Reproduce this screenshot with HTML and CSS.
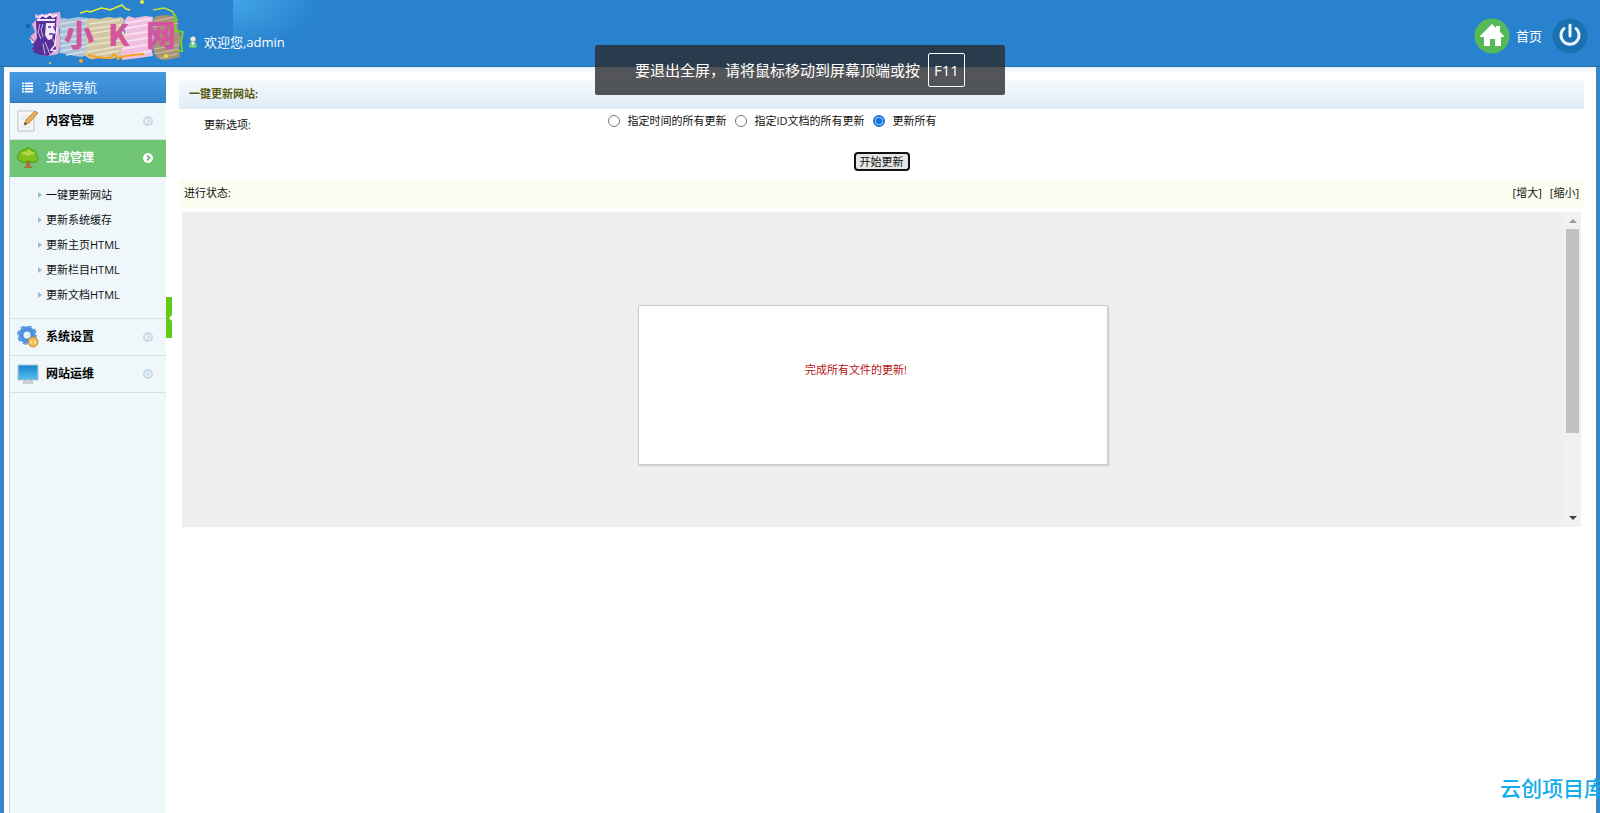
FILE: index.html
```html
<!DOCTYPE html>
<html lang="zh-CN">
<head>
<meta charset="utf-8">
<title>一键更新网站</title>
<link rel="stylesheet" href="styles.css">
</head>
<body>
<svg class="defs" aria-hidden="true">
  <symbol id="arrow" viewBox="0 0 12 12"><circle cx="6" cy="6" r="4" fill="none" stroke="currentColor" stroke-width="2"/><path d="M5 3.800 7.200 6 5 8.200" fill="none" stroke="currentColor" stroke-width="1.500"/></symbol>
</svg>
<div class="page">
  <header class="header">
    <div class="brand">
      <svg class="logo" viewBox="0 0 184 66" role="img" aria-label="小K网">
        <path d="M59 19l5-1 4 1 10-2 10 1 6 3-2 31-10 5-8-1-7-2-8-1 2-9z" fill="#aac2d8"/>
        <path d="M60 24l28-4M61 29l27-3M60 35l28-3M61 41l27-4M60 46l28-4M62 51l26-5M66 55l22-4" stroke="#d3e0ea" stroke-width="1.500"/>
        <path d="M86 20l5-2 9 1 8-2 7 1 6-1 3 2-1 10 3 8-4 19-11 3-9-1-12 1-6-4 2-10z" fill="#d2c6a4"/>
        <path d="M89 24l31-4M88 29l33-4M87 34l34-5M87 40l34-4M86 46l36-6M87 52l34-6M91 56l28-5" stroke="#ebe3cd" stroke-width="1.500"/>
        <path d="M124 21l4-5 7 2 10-2 8 1-1 12 2 9-3 8 2 10-14 2-8 1-9 1-1-11 5-7z" fill="#f0bfdf"/>
        <path d="M126 23l25-4M123 29l29-5M125 35l27-4M123 42l29-5M122 49l29-5M124 56l27-5" stroke="#f9deef" stroke-width="2"/>
        <path d="M122 30l5 10-5 8" fill="#f3efb8"/>
        <path d="M153 19l4-3 8-1 8 1 4 4 1 10 3 8-2 10 1 9-9 2-8 1-6-2-4-8 1-10z" fill="#a99478"/>
        <path d="M155 21l20-4M153 27l25-4M154 49l25-4M154 54l25-5M160 58l17-4" stroke="#d0c2ac" stroke-width="1"/>
        <path d="M35 14l5 1 20-3 1 9-2 10 2 11-3 12-10 2-7-1-8-4 2-6-6-7 6-6-3-8 4-4z" fill="#e8aed9"/>
        <path d="M36 23l1-8 3 3 3-4 4 3 4-4 2 4 4-2-1 8 1 15-2 2 1 9-8 7-8-1-7-3 1-9 3-5z" fill="#583099"/>
        <path d="M36 16l3 2 3-3 4 2 4-3 3 3 4-2M37 20h18" fill="none" stroke="#f2e6fa" stroke-width="2"/>
        <path d="M46 23h9l-1 6 2 4-3 1-1 5-4 1-3-5z" fill="#f4eafa"/>
        <path d="M40 24l-2 8 3 7M43 24l-2 6 2 7M45 42l5 12M43 44l2 10M53 39l3 8" fill="none" stroke="#cdb8e4"/>
        <path d="M48 27h3M53 27h1M49 34h4" stroke="#583099" stroke-width="1.500"/>
        <path d="M57 27l-2 18-4 5 5 1" fill="none" stroke="#f4eafa" stroke-width="1.500"/>
        <path d="M30 37l5 6-3 1M32 48l8 5" fill="#fff" stroke="#583099"/>
        <path d="M80 13l7-2 3 1 11-4 6 1 3 1 12-5 4 4 4 1" fill="none" stroke="#e9ed35" stroke-width="1.500"/>
        <path d="M153 10l11-2 8 3 4 6" fill="none" stroke="#c5e035" stroke-width="1.500"/>
        <path d="M173 13l4 7-4 2 3 9 7 1-2 10 1 9-4 0" fill="none" stroke="#79cd25" stroke-width="2"/>
        <path d="M88 55l15 3 7 0 4-4 4 5 3-2 11-2 12-1" fill="none" stroke="#f3a21b" stroke-width="2"/>
        <circle cx="142" cy="2" r="2" fill="#f2e83c"/><circle cx="28" cy="26" r="2" fill="#1f5aa8"/>
        <circle cx="81" cy="61" r="2" fill="#f7a51b"/><circle cx="50" cy="63" r="1" fill="#f2dc36"/>
        <circle cx="93" cy="59" r="1" fill="#f7a51b"/><circle cx="166" cy="56" r="2" fill="#f2e129"/>
        <text class="logo-text" x="64 108 146" y="46">小K网</text>
      </svg>
      <svg class="user-icon" viewBox="0 0 10 12" aria-hidden="true"><path d="M1 11q0-5 4-5t4 5q-4 2-8 0z" fill="#71c879"/><path d="M3 6h4L5 10z" fill="#e7fae4"/><circle cx="5" cy="3" r="2.600" fill="#f3ecd2"/></svg>
      <span class="welcome">欢迎您,admin</span>
    </div>
    <nav class="tools">
      <a class="tool" href="#home">
        <svg class="round" viewBox="0 0 36 36" aria-hidden="true"><circle cx="18" cy="18" r="17.500" fill="#56b957"/><path d="M6 18 18 6l4 4V8h4v6l4 4v1h-3v9h-6v-7h-5v7h-6v-9H6z" fill="#fff"/></svg>
        <span>首页</span>
      </a>
      <button class="tool" type="button" aria-label="退出"><svg class="round" viewBox="0 0 36 36" aria-hidden="true"><circle cx="18" cy="18" r="17.500" fill="#1a70b0"/><path d="M12 10.500a9 9 0 1 0 12 0M18 7v11" fill="none" stroke="#e9f6ff" stroke-width="3" stroke-linecap="round"/></svg></button>
    </nav>
  </header>

  <div class="frame">
    <aside class="sidebar">
      <h2 class="side-title"><svg class="list-icon" viewBox="0 0 12 12" aria-hidden="true"><path d="M0 1.500h2M0 4.500h2M0 7.500h2M0 10.500h2M3 1.500h9M3 4.500h9M3 7.500h9M3 10.500h9" stroke="#fff" stroke-width="2"/></svg>功能导航</h2>
      <nav>
        <a class="menu" href="#content">
          <svg class="menu-icon" viewBox="0 0 22 22" aria-hidden="true"><path d="M1 1h16v20H1z" fill="#f6f6f7" stroke="#bfc3cc"/><path d="M4 6h9M4 9h7M4 17h10" stroke="#dadde2"/><path d="M7 15l2-5 9-9 3 2-9 10z" fill="#e5ae5c" stroke="#b98a50"/><path d="M7 15l1-3 2 2z" fill="#444"/></svg>
          <span>内容管理</span><svg class="arrow"><use href="#arrow"/></svg>
        </a>
        <a class="menu active" href="#generate">
          <svg class="menu-icon" viewBox="0 0 22 22" aria-hidden="true"><path d="M9 12h5l-1 6 3 3H7l2-3z" fill="#ad7041"/><path d="M3 14q-5-3-1-7 0-4 5-4 4-5 8 0 5 0 4 5 4 4 0 7-4 2-7-1-5 3-9 0z" fill="#7fc01e" stroke="#4a9a18"/><path d="M4 7q2-3 5-2 4-4 6 0 3 0 3 3-4-2-6 1-4-2-8-2z" fill="#b0da45"/></svg>
          <span>生成管理</span><svg class="arrow" viewBox="0 0 12 12"><circle cx="6" cy="6" r="5" fill="#fff"/><path d="M5 3.500 7.500 6 5 8.500" fill="none" stroke="#55a95b" stroke-width="1.500"/></svg>
        </a>
        <ul class="submenu">
          <li><a href="#all">一键更新网站</a></li>
          <li><a href="#cache">更新系统缓存</a></li>
          <li><a href="#index">更新主页HTML</a></li>
          <li><a href="#column">更新栏目HTML</a></li>
          <li><a href="#document">更新文档HTML</a></li>
        </ul>
        <a class="menu" href="#settings">
          <svg class="menu-icon" viewBox="0 0 22 22" aria-hidden="true"><circle cx="10" cy="9" r="6" fill="none" stroke="#4d91d8" stroke-width="5"/><circle cx="10" cy="9" r="8.500" fill="none" stroke="#5ca0e4" stroke-width="3" stroke-dasharray="4 2.700"/><circle cx="10" cy="9" r="3" fill="#e6f2fa"/><circle cx="16" cy="16" r="5" fill="#e9bd5b" stroke="#c78c33"/><path d="M13 15l2 1-2 2M19 15l-2 1 2 2" fill="none" stroke="#fff3b0"/></svg>
          <span>系统设置</span><svg class="arrow"><use href="#arrow"/></svg>
        </a>
        <a class="menu" href="#operations">
          <svg class="menu-icon" viewBox="0 0 22 22" aria-hidden="true"><defs><linearGradient id="screen" x1="0" y1="0" x2="0" y2="1"><stop offset="0" stop-color="#1584cf"/><stop offset="1" stop-color="#56c0f0"/></linearGradient></defs><path d="M1 2h20v15H1z" fill="url(#screen)" stroke="#b4c4d0"/><path d="M8 17h6l2 3H6z" fill="#d5dde1" stroke="#abb7bf"/></svg>
          <span>网站运维</span><svg class="arrow"><use href="#arrow"/></svg>
        </a>
      </nav>
    </aside>
    <div class="divider"><button class="collapse" type="button" aria-label="收起导航"></button></div>
    <main class="main">
      <h1 class="title">一键更新网站:</h1>
      <form class="form">
        <fieldset class="options">
          <legend class="legend">更新选项:</legend>
          <div class="choices">
            <label><input type="radio" name="scope">指定时间的所有更新</label>
            <label><input type="radio" name="scope">指定ID文档的所有更新</label>
            <label><input type="radio" name="scope" checked>更新所有</label>
          </div>
        </fieldset>
        <div class="actions"><button class="start" type="button">开始更新</button></div>
      </form>
      <div class="status"><span>进行状态:</span><span class="resize"><a href="#larger">[增大]</a><a href="#smaller">[缩小]</a></span></div>
      <section class="result">
        <div class="stage"><p class="message">完成所有文件的更新!</p></div>
        <div class="scrollbar" aria-hidden="true"><i class="up"></i><i class="thumb"></i><i class="down"></i></div>
      </section>
    </main>
  </div>
  <div class="toast" role="status">要退出全屏，请将鼠标移动到屏幕顶端或按<kbd>F11</kbd></div>
  <div class="watermark">云创项目库</div>
</div>
</body>
</html>
```
FILE: styles.css
```css
* { box-sizing: border-box; }
body { margin: 0; font: 11px/16px "Open Sans", "Noto Sans CJK SC", sans-serif; color: #111; }
a { color: inherit; text-decoration: none; }
button { font: inherit; color: inherit; }
h1, h2, p, ul { margin: 0; padding: 0; }
.defs { position: absolute; width: 0; height: 0; }
.page { position: relative; display: flex; flex-direction: column; min-height: 100vh; overflow: hidden; }

.header { display: flex; justify-content: space-between; height: 67px; background: radial-gradient(ellipse 90px 50px at 0 0, #42a5e6, #2882ce) 233px 0 no-repeat, #2882ce; border-bottom: 1px solid #216fa9; color: #fff; font-size: 13px; }
.brand { display: flex; align-items: flex-start; }
.logo { width: 184px; height: 66px; }
.logo-text { font: 900 30px "Noto Sans CJK SC", sans-serif; fill: #d2559f; }
.user-icon { width: 10px; height: 14px; margin: 35px 6px 0 4px; }
.welcome { margin-top: 34px; }
.tools { display: flex; align-items: center; gap: 10px; padding: 5px 12px 0 0; }
.tool { display: flex; align-items: center; gap: 6px; padding: 0; border: 0; background: none; }
.round { width: 36px; height: 36px; display: block; }

.frame { flex: 1; display: flex; padding: 5px 12px 0 5px; border: solid #3985c9; border-width: 0 4px; box-shadow: inset 0 5px 4px -2px #e2f2f8; }
.sidebar { width: 157px; background: #eff7fb; border-left: 1px solid #c6d4dd; }
.side-title { display: flex; align-items: center; gap: 12px; height: 31px; padding-left: 12px; background: linear-gradient(#4499e2, #3584cd); border-bottom: 1px solid #3173ac; color: #fff; font-size: 13px; font-weight: 400; }
.list-icon { width: 11px; height: 11px; }
.menu { display: flex; align-items: center; height: 37px; padding: 0 12px 0 7px; border-bottom: 1px solid #d5e1e9; font-size: 12px; font-weight: 700; color: #000; }
.menu-icon { width: 22px; height: 22px; margin-right: 7px; }
.arrow { width: 12px; height: 12px; margin-left: auto; color: #c5d8e4; }
.active { background: #6fc574; color: #fff; border-color: #6fc574; }
.submenu { list-style: none; padding: 5px 0 11px 28px; border-bottom: 1px solid #d5e1e9; line-height: 25px; }
.submenu a { display: flex; align-items: center; gap: 4px; }
.submenu a::before { content: ""; border: solid transparent; border-width: 3px 0 3px 4px; border-left-color: #9dbccd; }
.divider { width: 13px; padding-top: 225px; }
.collapse { display: block; width: 6px; height: 41px; padding: 0; border: 0; background: #65c91b; }
.collapse::before { content: ""; display: block; margin-left: 2px; border: solid transparent; border-width: 3px 3px 3px 0; border-right-color: #fff; }

.main { flex: 1; padding-top: 8px; }
.title { height: 29px; padding: 0 10px; background: linear-gradient(#f4fafd, #dfebf5); font-size: 11px; line-height: 28px; color: #5a5a0e; }
.form { display: grid; grid-template-rows: 39px 31px; }
.options { display: grid; grid-template-columns: 30% 1fr; margin: 0; padding: 4px 0 0; border: 0; }
.legend { float: left; padding: 4px 0 0 25px; }
.choices { display: flex; gap: 8px; padding-left: 7px; grid-column: 2; }
.choices label { display: flex; align-items: center; gap: 8px; height: 16px; }
.choices input { appearance: none; width: 12px; height: 12px; margin: 0; border: 1px solid #777; border-radius: 50%; background: #fff; }
.choices input:checked { border: 2px solid #1674dc; background: radial-gradient(#1674dc 0 3px, #fff 4px); }
.actions { display: flex; justify-content: center; align-items: flex-start; padding-top: 4px; }
.start { height: 19px; padding: 0 4px; border: 2px solid #111; border-radius: 4px; background: #e6e6e6; line-height: 12px; }
.status { display: flex; justify-content: space-between; align-items: center; height: 30px; padding: 0 5px 2px; background: #fafdf0; }
.resize { display: flex; gap: 8px; }
.result { display: flex; height: 315px; margin: 3px 3px 0; background: #efefef; }
.stage { flex: 1; padding-top: 93px; }
.message { width: 34%; height: 160px; margin: 0 auto; padding: 56px 34px 0 0; border: 1px solid #ccc; background: #fff; box-shadow: 1px 1px 2px #ccc; text-align: center; color: #b51414; }
.scrollbar { display: flex; flex-direction: column; align-items: center; width: 17px; padding: 7px 0; background: #f1f1f1; }
.up { border: solid transparent; border-width: 0 4px 4px; border-bottom-color: #999; }
.thumb { width: 13px; height: 204px; margin: 6px 0 auto; background: #c1c1c1; }
.down { border: solid transparent; border-width: 4px 4px 0; border-top-color: #444; }

.toast { position: absolute; top: 45px; left: 50%; transform: translateX(-50%); display: flex; align-items: center; justify-content: center; gap: 8px; width: 410px; height: 50px; border-radius: 2px; background: rgba(40, 42, 46, .8); color: #fff; font-size: 15px; }
.toast kbd { padding: 8px 5px; border: 1px solid #fff; border-radius: 2px; font: 15px/16px "Open Sans", sans-serif; }
.watermark { position: absolute; right: -5px; bottom: 13px; font-size: 21px; line-height: 24px; font-weight: 500; color: #13ade9; white-space: nowrap; }
```
